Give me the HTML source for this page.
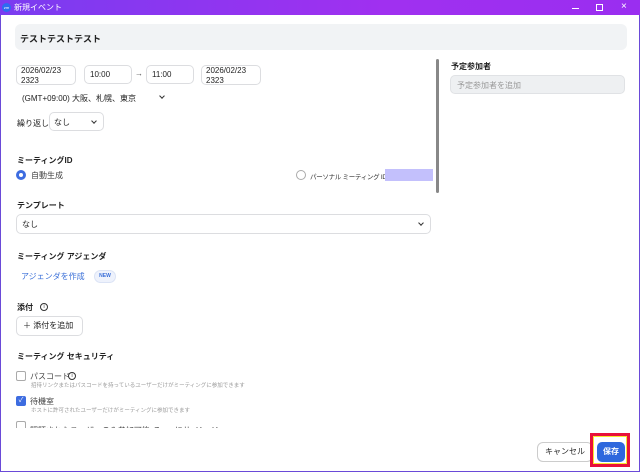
<!DOCTYPE html>
<html><head><meta charset="utf-8"><style>
*{box-sizing:border-box;margin:0;padding:0}
body{width:640px;height:472px;overflow:hidden;background:#fff;font-family:"Liberation Sans","Noto Sans CJK JP",sans-serif;color:#222;position:relative}
.a{position:absolute;white-space:nowrap}
.win{position:absolute;left:0;top:0;width:640px;height:472px;border:1px solid #6a4ad8;border-top:none}
.tb{position:absolute;left:0;top:0;width:640px;height:15px;background:linear-gradient(90deg,#7a3cf0,#a030f0 60%,#9a2ef0);color:#fff;font-size:8px}
.box{position:absolute;border:1px solid #dcdde0;border-radius:5px;background:#fff}
.f8{font-size:8px}.f7{font-size:7px}.b{font-weight:bold}
.chev{position:absolute;width:4px;height:4px;border-right:1px solid #333;border-bottom:1px solid #333;transform:rotate(45deg)}
</style></head><body>
<div class="win"></div>
<div class="tb">
 <div class="a" style="left:2px;top:3px;width:9px;height:9px;border-radius:50%;background:#2d6cf0;font-size:4px;line-height:9px;text-align:center">zm</div>
 <div class="a" style="left:14px;top:2px">新規イベント</div>
 <div class="a" style="left:572px;top:8px;width:7px;border-top:1px solid #fff"></div>
 <div class="a" style="left:596px;top:4px;width:7px;height:7px;border:1px solid #fff"></div>
 <div class="a" style="left:621px;top:1px;font-size:10px">×</div>
</div>
<div class="a" style="left:15px;top:24px;width:612px;height:26px;background:#f1f3f5;border-radius:6px"></div>
<div class="a b" style="left:20px;top:32px;font-size:9px">テストテストテスト</div>

<div class="box" style="left:16px;top:65px;width:60px;height:20px"></div>
<div class="a f8" style="left:21px;top:66px;line-height:10px">2026/02/23<br>2323</div>
<div class="box" style="left:84px;top:65px;width:48px;height:19px"></div>
<div class="a f8" style="left:90px;top:70px">10:00</div>
<div class="a f8" style="left:135px;top:69px;color:#555">→</div>
<div class="box" style="left:146px;top:65px;width:48px;height:19px"></div>
<div class="a f8" style="left:152px;top:70px">11:00</div>
<div class="box" style="left:201px;top:65px;width:60px;height:20px"></div>
<div class="a f8" style="left:206px;top:66px;line-height:10px">2026/02/23<br>2323</div>
<div class="a f8" style="left:22px;top:93px">(GMT+09:00) 大阪、札幌、東京</div>
<div class="chev" style="left:160px;top:94px"></div>
<div class="a f8" style="left:17px;top:118px">繰り返し</div>
<div class="box" style="left:49px;top:112px;width:55px;height:19px"></div>
<div class="a f8" style="left:54px;top:117px">なし</div>
<div class="chev" style="left:92px;top:119px"></div>

<div class="a f8 b" style="left:17px;top:155px">ミーティングID</div>
<div class="a" style="left:16px;top:170px;width:10px;height:10px;border-radius:50%;border:3px solid #3d6ce0"></div>
<div class="a f8" style="left:31px;top:170px;color:#444">自動生成</div>
<div class="a" style="left:296px;top:170px;width:10px;height:10px;border-radius:50%;border:1px solid #aaa"></div>
<div class="a" style="left:310px;top:171px;color:#333;font-size:6.5px;letter-spacing:-0.3px">パーソナル ミーティング ID</div>
<div class="a" style="left:385px;top:169px;width:48px;height:12px;background:#c3c0fc"></div>
<div class="a" style="left:436px;top:59px;width:3px;height:134px;background:#888;border-radius:2px"></div>

<div class="a f8 b" style="left:451px;top:61px">予定参加者</div>
<div class="a" style="left:450px;top:75px;width:175px;height:19px;background:#eef0f2;border:1px solid #e0e2e5;border-radius:5px"></div>
<div class="a f8" style="left:457px;top:80px;color:#999">予定参加者を追加</div>

<div class="a f8 b" style="left:17px;top:200px">テンプレート</div>
<div class="box" style="left:16px;top:214px;width:415px;height:20px"></div>
<div class="a f8" style="left:22px;top:219px">なし</div>
<div class="chev" style="left:419px;top:221px"></div>

<div class="a f8 b" style="left:17px;top:251px">ミーティング アジェンダ</div>
<div class="a f8" style="left:21px;top:271px;color:#3a6fd8">アジェンダを作成</div>
<div class="a" style="left:94px;top:270px;width:22px;height:13px;border-radius:7px;background:#eef2fc;border:1px solid #dbe3f5;font-size:5px;font-weight:bold;color:#3a6fd8;text-align:center;line-height:11px">NEW</div>

<div class="a f8 b" style="left:17px;top:302px">添付</div>
<div class="a" style="left:40px;top:303px;width:8px;height:8px;border-radius:50%;border:1px solid #333;font-size:5px;text-align:center;line-height:6px">i</div>
<div class="box" style="left:16px;top:316px;width:67px;height:20px"></div>
<div class="a f8" style="left:23px;top:320px">＋ 添付を追加</div>

<div class="a f8 b" style="left:17px;top:351px">ミーティング セキュリティ</div>
<div class="a" style="left:16px;top:371px;width:10px;height:10px;border:1px solid #aaa;border-radius:2px"></div>
<div class="a f8" style="left:30px;top:371px;color:#444">パスコード</div>
<div class="a" style="left:68px;top:372px;width:8px;height:8px;border-radius:50%;border:1px solid #333;font-size:5px;text-align:center;line-height:6px">i</div>
<div class="a" style="left:31px;top:381px;font-size:5.5px;color:#999">招待リンクまたはパスコードを持っているユーザーだけがミーティングに参加できます</div>
<div class="a" style="left:16px;top:396px;width:10px;height:10px;background:#3d6ce0;border-radius:2px;color:#fff;font-size:7px;line-height:10px;text-align:center">✓</div>
<div class="a f8" style="left:30px;top:396px;color:#444">待機室</div>
<div class="a" style="left:31px;top:406px;font-size:5.5px;color:#999">ホストに許可されたユーザーだけがミーティングに参加できます</div>
<div class="a" style="left:16px;top:421px;width:10px;height:7px;border:1px solid #aaa;border-bottom:none;border-radius:2px 2px 0 0"></div>
<div class="a" style="left:30px;top:420px;width:210px;height:8px;overflow:hidden"><span class="f8" style="color:#444">認証されたユーザーのみ参加可能: Zoomにサインイン</span></div>

<div class="a" style="left:537px;top:442px;width:56px;height:20px;border:1px solid #ccc;border-radius:6px;font-size:8px;text-align:center;line-height:18px">キャンセル</div>
<div class="a" style="left:590px;top:433px;width:40px;height:34px;border:3px solid #e8103a;background:#fff"></div>
<div class="a" style="left:593px;top:436px;width:34px;height:28px;border:1px solid #f5e830"></div>
<div class="a" style="left:597px;top:442px;width:28px;height:20px;background:#2e67dd;border-radius:5px;color:#fff;font-size:8px;font-weight:bold;text-align:center;line-height:20px">保存</div>
</body></html>
